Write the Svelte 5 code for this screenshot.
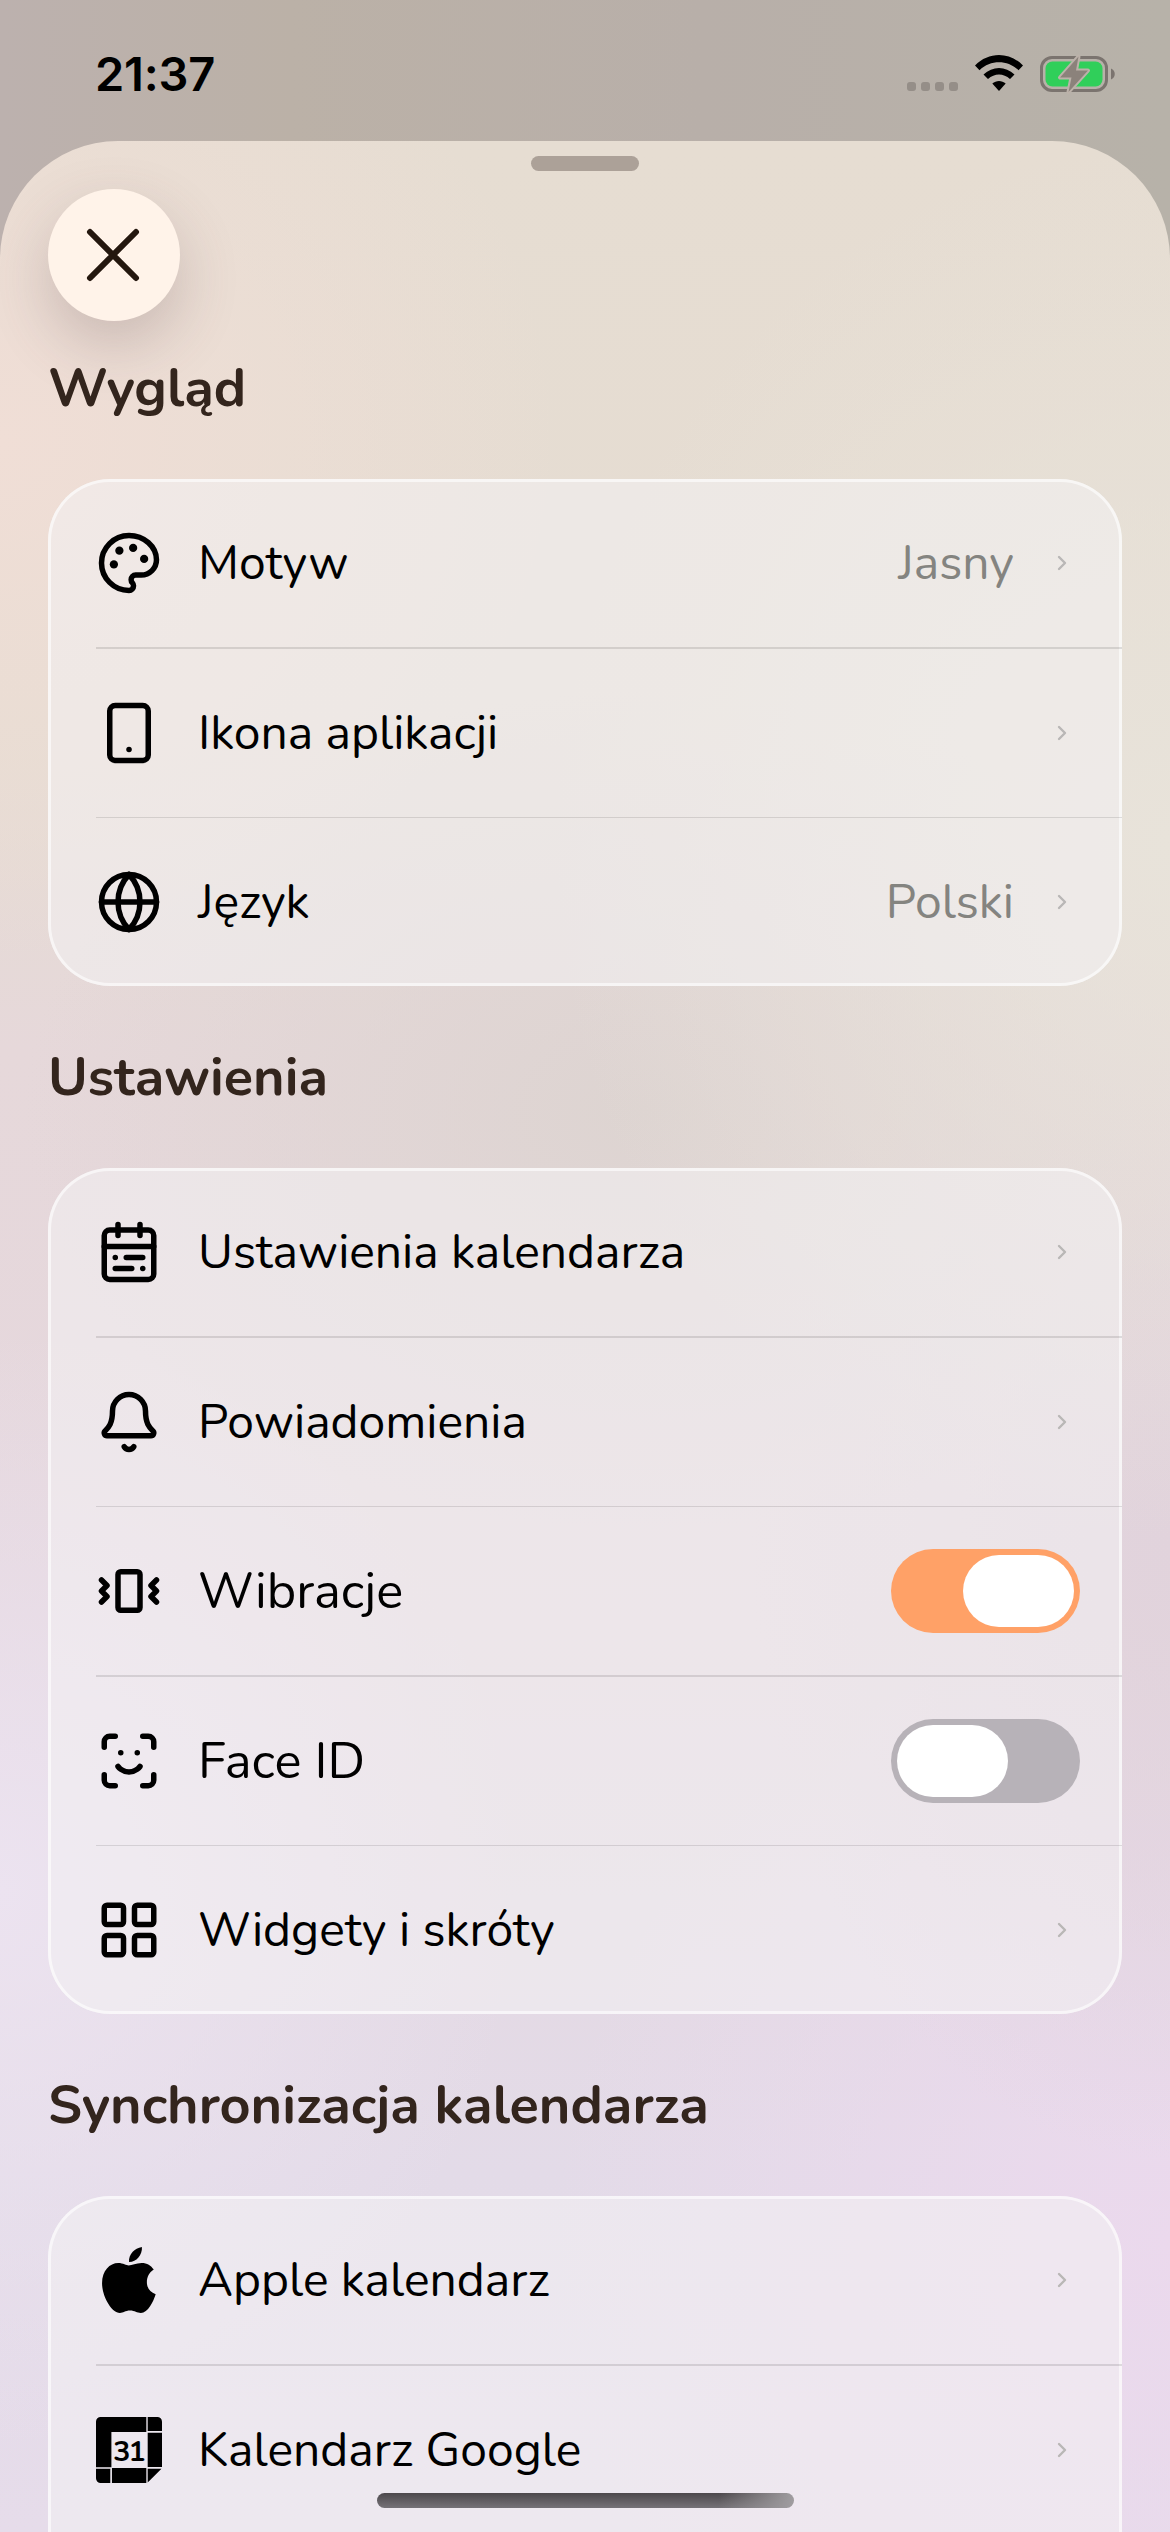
<script>
    // a row ends with a chevron, with or without a value, unless it is a toggle
    let settings = [
        {
            title: "Wygląd",
            rows: [
                { icon: "palette", label: "Motyw", value: "Jasny" },
                { icon: "tablet", label: "Ikona aplikacji" },
                { icon: "globe", label: "Język", value: "Polski" },
            ],
        },
        {
            title: "Ustawienia",
            rows: [
                { icon: "calendar", label: "Ustawienia kalendarza" },
                { icon: "bell", label: "Powiadomienia" },
                { icon: "vibrate", label: "Wibracje", toggle: true, on: true },
                { icon: "face", label: "Face ID", toggle: true, on: false },
                { icon: "widgets", label: "Widgety i skróty" },
            ],
        },
        {
            title: "Synchronizacja kalendarza",
            rows: [
                { icon: "apple", label: "Apple kalendarz" },
                { icon: "google", label: "Kalendarz Google" },
            ],
        },
    ];

    const flip = (row) => {
        row.on = !row.on;
        settings = settings;
    };
</script>

<svelte:head>
    <title>Ustawienia</title>
</svelte:head>

<div class="screen">
    <div class="status">
        <span class="time">21:37</span>
        <div class="indicators">
            <div class="signal"><i></i><i></i><i></i><i></i></div>
            <svg class="wifi" viewBox="0 0 48 36">
                <path d="M0 10.500C13.500 -3.500 34.500 -3.500 48 10.500L43.500 15.200C32.500 4.700 15.500 4.700 4.500 15.200Z" />
                <path d="M8.500 19.500C17.500 10.800 30.500 10.800 39.500 19.500L35 24C28.500 18 19.500 18 13 24Z" />
                <path d="M17.300 28.600C21.200 25.200 26.800 25.200 30.700 28.600L24 36Z" />
            </svg>
            <svg class="battery" viewBox="0 0 76 44">
                <rect x="1.500" y="5.500" width="65" height="33" rx="10.500" fill="none" stroke="#7b746f" stroke-width="3" />
                <path d="M71 16.500C76 18.500 76 25.500 71 27.500Z" fill="#7b746f" />
                <rect x="5.500" y="9.500" width="57" height="25" rx="7" fill="#30cf5a" />
                <path
                    d="M38.500 4.500L20 25.500H31.500L28.500 40L48 18.500H36Z"
                    fill="#8b827b"
                    stroke="#bcb2aa"
                    stroke-width="4"
                    stroke-linejoin="round"
                    paint-order="stroke"
                />
            </svg>
        </div>
    </div>

    <main class="sheet">
        <div class="grabber"></div>
        <button class="close" aria-label="Zamknij">
            <svg viewBox="0 0 60 60"><path d="M7 7L53 53M53 7L7 53" /></svg>
        </button>

        {#each settings as section}
            <h2>{section.title}</h2>
            <div class="card">
                {#each section.rows as row}
                    <div class="row">
                        <svg class="icon" viewBox="0 0 24 24">
                            {#if row.icon === "palette"}
                                <path d="M12 2C6.500 2 2 6.500 2 12s4.500 10 10 10c.926 0 1.648-.746 1.648-1.688 0-.437-.18-.835-.437-1.125-.29-.289-.438-.652-.438-1.125a1.640 1.640 0 0 1 1.668-1.668h1.996c3.051 0 5.555-2.503 5.555-5.554C21.965 6.012 17.461 2 12 2z" />
                                <circle class="solid" cx="13.500" cy="6.500" r="1.500" />
                                <circle class="solid" cx="17.500" cy="10.500" r="1.500" />
                                <circle class="solid" cx="8.500" cy="7.500" r="1.500" />
                                <circle class="solid" cx="6.500" cy="12.500" r="1.500" />
                            {:else if row.icon === "tablet"}
                                <rect x="5" y="2" width="14" height="20" rx="2" />
                                <path d="M12 18h.01" />
                            {:else if row.icon === "globe"}
                                <circle cx="12" cy="12" r="10" />
                                <path d="M12 2a14.500 14.500 0 0 0 0 20 14.500 14.500 0 0 0 0-20M2 12h20" />
                            {:else if row.icon === "calendar"}
                                <rect x="3" y="4" width="18" height="18" rx="2" />
                                <path d="M16 2v4M3 10h18M8 2v4M17 14h-6M13 18H7M7 14h.01M17 18h.01" />
                            {:else if row.icon === "bell"}
                                <path d="M10.268 21a2 2 0 0 0 3.464 0" />
                                <path d="M3.262 15.326A1 1 0 0 0 4 17h16a1 1 0 0 0 .740-1.673C19.410 13.956 18 12.499 18 8A6 6 0 0 0 6 8c0 4.499-1.411 5.956-2.738 7.326" />
                            {:else if row.icon === "vibrate"}
                                <path d="m2 8 2 2-2 2 2 2-2 2M22 8l-2 2 2 2-2 2 2 2" />
                                <rect x="8" y="5" width="8" height="14" rx="1" />
                            {:else if row.icon === "face"}
                                <path d="M3 7V5a2 2 0 0 1 2-2h2M17 3h2a2 2 0 0 1 2 2v2M21 17v2a2 2 0 0 1-2 2h-2M7 21H5a2 2 0 0 1-2-2v-2" />
                                <path d="M8 14s1.500 2 4 2 4-2 4-2M9 9h.01M15 9h.01" />
                            {:else if row.icon === "widgets"}
                                <rect x="3" y="3" width="7" height="7" rx="1" />
                                <rect x="14" y="3" width="7" height="7" rx="1" />
                                <rect x="14" y="14" width="7" height="7" rx="1" />
                                <rect x="3" y="14" width="7" height="7" rx="1" />
                            {:else if row.icon === "apple"}
                                <path class="solid" d="M16.700 0C16.900 3 14.600 5.500 12 5.450C11.800 2.700 14 .4 16.700 0z" />
                                <path class="solid" d="M21 8.200C19.300 9.200 18.500 11 18.500 12.800C18.500 14.900 19.700 16.400 21.700 17.200C20.900 19.800 18.900 24 16.300 24C14.900 24 14.100 23.100 12.400 23.100C10.600 23.100 9.900 24 8.700 24C5.600 24 2.200 17.800 2.200 13.200C2.200 8.600 5 5.800 8.100 5.800C9.900 5.800 11 6.700 11.900 6.700C13 6.700 14.600 5.800 16.600 5.800C18.600 5.800 20 6.700 21 8.200z" />
                            {:else}
                                <path class="solid" d="M1.700 0H18.300V5.450H5.600V18.300H0V1.700A1.700 1.700 0 0 1 1.700 0zM18.800 0H22.300A1.700 1.700 0 0 1 24 1.700V5.100H18.800zM18.800 5.700H24V18.200H18.800zM0 18.800H5.200V24H1.700A1.700 1.700 0 0 1 0 22.300zM5.800 18.500H18.300V24H5.800zM18.800 18.800H23.800L18.800 23.800z" />
                                <text x="11.800" y="15.900">31</text>
                            {/if}
                        </svg>
                        <span class="label" class:large={row.toggle}>{row.label}</span>
                        {#if row.toggle}
                            <button
                                class="switch"
                                class:on={row.on}
                                aria-label={row.label}
                                on:click={() => flip(row)}
                            >
                                <span class="knob"></span>
                            </button>
                        {:else}
                            {#if row.value}<span class="value">{row.value}</span>{/if}
                            <svg class="chevron" viewBox="0 0 24 24"><path d="M9 18l6-6-6-6" /></svg>
                        {/if}
                    </div>
                {/each}
            </div>
        {/each}
    </main>

    <div class="home"></div>
</div>

<style>
    :global(body) {
        margin: 0;
        overflow: hidden;
    }

    .screen {
        position: relative;
        width: 1170px;
        height: 2532px;
        overflow: hidden;
        font-family: Nunito, Lato, "Open Sans", sans-serif;
        color: #000;
        background: linear-gradient(90deg, #bcb1ae 0, #bbb1a7 25%, #b8afa9 60%, #b7b2a9 100%);
    }

    .status {
        display: flex;
        justify-content: space-between;
        height: 141px;
        padding: 0 54px 0 95px;
        box-sizing: border-box;
    }

    .time {
        padding-top: 46px;
        font: 600 47px/56px Inter, sans-serif;
        letter-spacing: -0.2px;
    }

    .indicators {
        display: flex;
        padding-top: 52px;
    }

    .signal {
        display: flex;
        gap: 5px;
        padding-top: 30px;
        margin-right: 17px;
    }

    .signal i {
        width: 9px;
        height: 9px;
        border-radius: 3px;
        background: #958e88;
    }

    .wifi {
        width: 48px;
        height: 36px;
        margin: 3px 17px 0 0;
    }

    .battery {
        width: 76px;
        height: 44px;
    }

    .sheet {
        height: 2391px;
        padding: 15px 48px 0;
        box-sizing: border-box;
        overflow: hidden;
        border-radius: 118px 118px 0 0;
        background:
            radial-gradient(560px 520px at 0 300px, #f0ded6 0, #f0ded600 100%),
            radial-gradient(620px 700px at 100% 700px, #e8e3da 0, #e8e3da00 100%),
            radial-gradient(620px 420px at 55% 970px, #ddd4d1 0, #ddd4d100 100%),
            radial-gradient(420px 620px at 100% 1400px, #e1d3dc 0, #e1d3dc00 100%),
            radial-gradient(520px 560px at 0 1750px, #ece3f0 0, #ece3f000 100%),
            radial-gradient(620px 620px at 100% 2100px, #ebd9ed 0, #ebd9ed00 100%),
            linear-gradient(#e6ddd2 0, #e5dcd2 25%, #e6d8da 38%, #e5d7de 62%, #e3dbe8 85%, #e6dcea 100%);
    }

    .grabber {
        width: 108px;
        height: 15px;
        margin: 0 auto;
        border-radius: 8px;
        background: #aca198;
    }

    .close {
        display: flex;
        align-items: center;
        justify-content: center;
        width: 132px;
        height: 132px;
        margin: 18px 0 24px;
        padding: 0 2px 0 0;
        border: 0;
        border-radius: 50%;
        background: #fff3e9;
        box-shadow: 0 24px 60px rgba(90, 70, 75, 0.24);
    }

    .close svg {
        width: 60px;
        height: 60px;
        fill: none;
        stroke: #24170e;
        stroke-width: 6;
        stroke-linecap: round;
    }

    h2 {
        height: 134px;
        margin: 48px 0 0;
        font-size: 54px;
        line-height: 86px;
        font-weight: 700;
        color: #33251d;
    }

    .close + h2 {
        margin-top: 0;
    }

    .card {
        border-radius: 62px;
        background: rgba(243, 241, 243, 0.57);
        box-shadow: inset 0 0 0 3px rgba(255, 255, 255, 0.6);
    }

    /* the last card runs on below the screen */
    .card:last-child {
        padding-bottom: 96px;
    }

    .row {
        position: relative;
        display: flex;
        align-items: center;
        height: 168px;
        padding: 0 42px 0 48px;
    }

    .row + .row {
        margin-top: 1px;
    }

    .row:nth-child(even) {
        margin-top: 2px;
    }

    .row + .row::before {
        content: "";
        position: absolute;
        top: -1px;
        left: 48px;
        right: 0;
        height: 1px;
        background: rgba(0, 0, 0, 0.11);
    }

    .row:nth-child(even)::before {
        top: -2px;
        height: 2px;
    }

    .icon {
        width: 66px;
        height: 66px;
        margin-right: 36px;
        fill: none;
        stroke: #000;
        stroke-width: 2;
        stroke-linecap: round;
        stroke-linejoin: round;
        overflow: visible;
    }

    .icon .solid,
    .icon text {
        fill: #000;
        stroke: none;
    }

    .icon text {
        font-size: 10.4px;
        font-weight: 700;
        text-anchor: middle;
        letter-spacing: -0.7px;
    }

    .label {
        flex: 1;
        font-size: 48px;
    }

    .label.large {
        font-size: 50.6px;
    }

    .value {
        margin-right: 36px;
        font-size: 48px;
        color: #848480;
    }

    .chevron {
        width: 24px;
        height: 24px;
        margin-right: 6px;
        fill: none;
        stroke: #b9b7b6;
        stroke-width: 2.4;
        stroke-linecap: round;
        stroke-linejoin: round;
    }

    .switch {
        display: flex;
        width: 189px;
        height: 84px;
        padding: 6px;
        box-sizing: border-box;
        border: 0;
        border-radius: 42px;
        background: #b7b2b8;
    }

    .switch.on {
        justify-content: flex-end;
        background: #ffa167;
    }

    .knob {
        width: 111px;
        height: 72px;
        border-radius: 36px;
        background: #fff;
    }

    .home {
        position: absolute;
        left: 377px;
        bottom: 24px;
        width: 417px;
        height: 15px;
        border-radius: 8px;
        background:
            linear-gradient(90deg, #a09da000 82%, #a09da0 100%),
            linear-gradient(#4d484c, #757277);
    }
</style>
